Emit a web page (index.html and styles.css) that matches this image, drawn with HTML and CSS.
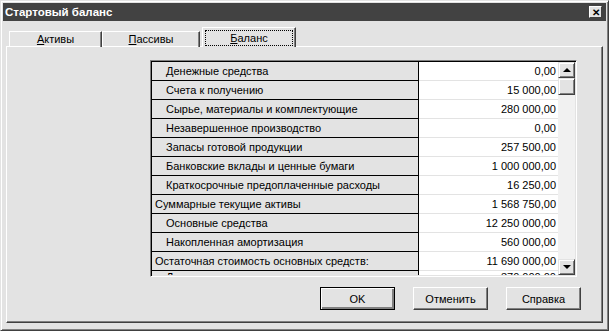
FILE: index.html
```html
<!DOCTYPE html>
<html lang="ru">

<head>
  <meta charset="UTF-8">
  <title>Стартовый баланс</title>
  <link rel="stylesheet" href="styles.css">
</head>

<body>
  <div class="window">
    <div class="titlebar">
      <span class="title">Стартовый баланс</span>
      <span class="close">✕</span>
    </div>

    <div class="tabs">
      <div class="tab tab-first"><u>А</u>ктивы</div>
      <div class="tab tab-second"><u>П</u>ассивы</div>
      <div class="tab active"><span class="focus"><u>Б</u>аланс</span></div>
    </div>

    <div class="panel">
      <div class="grid">
        <div class="rows">
          <div class="row"><div class="label sub">Денежные средства</div><div class="value">0,00</div></div>
          <div class="row"><div class="label sub">Счета к получению</div><div class="value">15 000,00</div></div>
          <div class="row"><div class="label sub">Сырье, материалы и комплектующие</div><div class="value">280 000,00</div></div>
          <div class="row"><div class="label sub">Незавершенное производство</div><div class="value">0,00</div></div>
          <div class="row"><div class="label sub">Запасы готовой продукции</div><div class="value">257 500,00</div></div>
          <div class="row"><div class="label sub">Банковские вклады и ценные бумаги</div><div class="value">1 000 000,00</div></div>
          <div class="row"><div class="label sub">Краткосрочные предоплаченные расходы</div><div class="value">16 250,00</div></div>
          <div class="row"><div class="label">Суммарные текущие активы</div><div class="value">1 568 750,00</div></div>
          <div class="row"><div class="label sub">Основные средства</div><div class="value">12 250 000,00</div></div>
          <div class="row"><div class="label sub">Накопленная амортизация</div><div class="value">560 000,00</div></div>
          <div class="row"><div class="label">Остаточная стоимость основных средств:</div><div class="value">11 690 000,00</div></div>
          <div class="row last"><div class="label sub">Долгосрочные инвестиции</div><div class="value">370 000,00</div></div>
        </div>
        <div class="scrollbar">
          <div class="sb-btn"><span class="arrow-up"></span></div>
          <div class="sb-thumb"></div>
          <div class="sb-track"></div>
          <div class="sb-btn"><span class="arrow-down"></span></div>
        </div>
      </div>

      <div class="buttons">
        <button type="button" class="btn default">OK</button>
        <button type="button" class="btn">Отменить</button>
        <button type="button" class="btn">Справка</button>
      </div>
    </div>
  </div>
</body>

</html>
```

FILE: styles.css
```css
body {
  margin: 0;
  padding: 0;
  background: #e3e3e3;
  font-family: 'Liberation Sans', Arial, sans-serif;
  font-size: 11px;
  color: #000;
}

*,
*:before,
*:after {
  box-sizing: border-box;
}

.window {
  width: 609px;
  height: 331px;
  padding: 1px;
  border: 1px solid;
  border-color: #e3e3e3 #404040 #404040 #e3e3e3;
  box-shadow: inset 1px 1px #fff, inset -1px -1px #808080;
  display: flex;
  flex-direction: column;
}

.titlebar {
  height: 18px;
  margin: 1px 1px 0 1px;
  background: #424242;
  color: #fff;
  display: flex;
  align-items: center;
  justify-content: space-between;
  padding: 0 4px 0 2px;
}

.title {
  font-weight: bold;
  font-size: 11.5px;
}

.close {
  width: 13px;
  height: 12px;
  background: #e3e3e3;
  color: #000;
  font-size: 10px;
  font-weight: bold;
  line-height: 11px;
  text-align: center;
  border: 1px solid;
  border-color: #fff #404040 #404040 #fff;
}

.tabs {
  display: flex;
  align-items: flex-end;
  height: 25px;
  padding-left: 7px;
}

.tab {
  height: 16px;
  margin-bottom: -1px;
  border: 1px solid;
  border-bottom: none;
  border-color: #fff #404040 transparent #fff;
  box-shadow: inset -1px 0 #808080;
  text-align: center;
  line-height: 15px;
  position: relative;
}

.tab-first {
  width: 93px;
}

.tab-second {
  width: 98px;
}

.tab.active {
  width: 94px;
  height: 20px;
  margin-left: 2px;
  background: #e3e3e3;
  z-index: 1;
  padding: 2px 2px 0 2px;
}

.focus {
  display: block;
  height: 16px;
  line-height: 14px;
  border: 1px dotted #000;
}

.panel {
  flex: 1;
  margin: 0 4px 6px 4px;
  border: 1px solid;
  border-color: #fff #404040 #404040 #fff;
  box-shadow: inset -1px -1px #808080;
  padding: 13px 21px 0 143px;
}

.grid {
  display: flex;
  height: 217px;
  width: 427px;
  border: 1px solid;
  border-color: #808080 #fff #fff #808080;
  box-shadow: inset 1px 1px #000, inset -1px -1px #e3e3e3;
  padding: 1px;
}

.rows {
  width: 406px;
  overflow: hidden;
}

.row {
  display: flex;
  height: 19px;
}

.label {
  width: 267px;
  border-right: 1px solid #000;
  border-bottom: 1px solid #000;
  padding-left: 3px;
  line-height: 18px;
  white-space: nowrap;
}

.label.sub {
  padding-left: 14px;
}

.value {
  flex: 1;
  background: #fff;
  border-bottom: 1px solid #e3e3e3;
  text-align: right;
  padding-right: 2px;
  line-height: 18px;
}

/* partly scrolled row: only the tops of the glyphs show */
.row.last .label,
.row.last .value {
  line-height: 12px;
}

.scrollbar {
  width: 17px;
  display: flex;
  flex-direction: column;
}

.sb-btn,
.sb-thumb {
  background: #e3e3e3;
  border: 1px solid;
  border-color: #e3e3e3 #404040 #404040 #e3e3e3;
  box-shadow: inset 1px 1px #fff, inset -1px -1px #808080;
  display: flex;
  align-items: center;
  justify-content: center;
}

.sb-btn {
  height: 16px;
}

.sb-thumb {
  height: 17px;
}

.sb-track {
  flex: 1;
  background: #f1f1f1;
}

.arrow-up {
  border-left: 4px solid transparent;
  border-right: 4px solid transparent;
  border-bottom: 4px solid #000;
}

.arrow-down {
  border-left: 4px solid transparent;
  border-right: 4px solid transparent;
  border-top: 4px solid #000;
}

.buttons {
  display: flex;
  justify-content: flex-end;
  gap: 18px;
  margin-top: 10px;
}

.btn {
  width: 75px;
  height: 23px;
  padding: 0;
  font-family: 'Liberation Sans', Arial, sans-serif;
  font-size: 11px;
  color: #000;
  background: #e3e3e3;
  border: 1px solid;
  border-color: #fff #404040 #404040 #fff;
  box-shadow: inset -1px -1px #808080;
}

.btn.default {
  border: 1px solid #000;
  box-shadow: inset 1px 1px #fff, inset -2px -2px #808080;
}
```
